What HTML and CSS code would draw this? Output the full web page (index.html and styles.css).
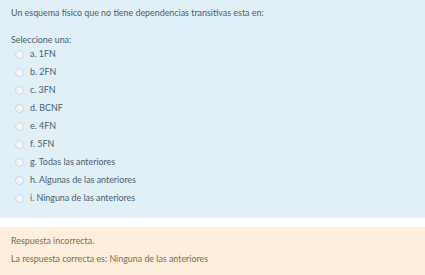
FILE: index.html
```
<!DOCTYPE html>
<html lang="es">
<head>
  <meta charset="UTF-8" />
  <title>Pregunta</title>
  <link rel="stylesheet" href="styles.css">
</head>
<body>
  <div class="formulation">
    <div class="qtext">Un esquema físico que no tiene dependencias transitivas esta en:</div>
    <div class="prompt">Seleccione una:</div>
    <div class="answer">
      <div class="option"><span class="radio"></span><span>a. 1FN</span></div>
      <div class="option"><span class="radio"></span><span>b. 2FN</span></div>
      <div class="option"><span class="radio"></span><span>c. 3FN</span></div>
      <div class="option"><span class="radio"></span><span>d. BCNF</span></div>
      <div class="option"><span class="radio"></span><span>e. 4FN</span></div>
      <div class="option"><span class="radio"></span><span>f. 5FN</span></div>
      <div class="option"><span class="radio"></span><span>g. Todas las anteriores</span></div>
      <div class="option"><span class="radio"></span><span>h. Algunas de las anteriores</span></div>
      <div class="option"><span class="radio"></span><span>i. Ninguna de las anteriores</span></div>
    </div>
  </div>

  <div class="outcome">
    <div class="feedback">Respuesta incorrecta.</div>
    <div class="rightanswer">La respuesta correcta es: Ninguna de las anteriores</div>
  </div>
</body>
</html>
```

FILE: styles.css
```
body {
  margin: 0;
  padding: 0;
  font-family: 'Lato', 'Open Sans', sans-serif;
  font-size: 8.9px;
  line-height: 18px;
  background: #fff;
}

.formulation {
  background: #e1eff7;
  color: #45606c;
  padding: 4px 11px 10px;
  height: 204px;
}

.qtext {
  margin-bottom: 9px;
}

.answer {
  margin-top: -4px;
  padding-left: 4px;
}

.option {
  display: flex;
  align-items: center;
  gap: 6px;
}

.radio {
  width: 7px;
  height: 7px;
  border: 1px solid #ccd6db;
  border-radius: 50%;
  background: #f2f6f8;
}

.outcome {
  margin-top: 9px;
  background: #fcefdd;
  color: #8a6d3b;
  padding: 5px 11px 10px;
}
```
